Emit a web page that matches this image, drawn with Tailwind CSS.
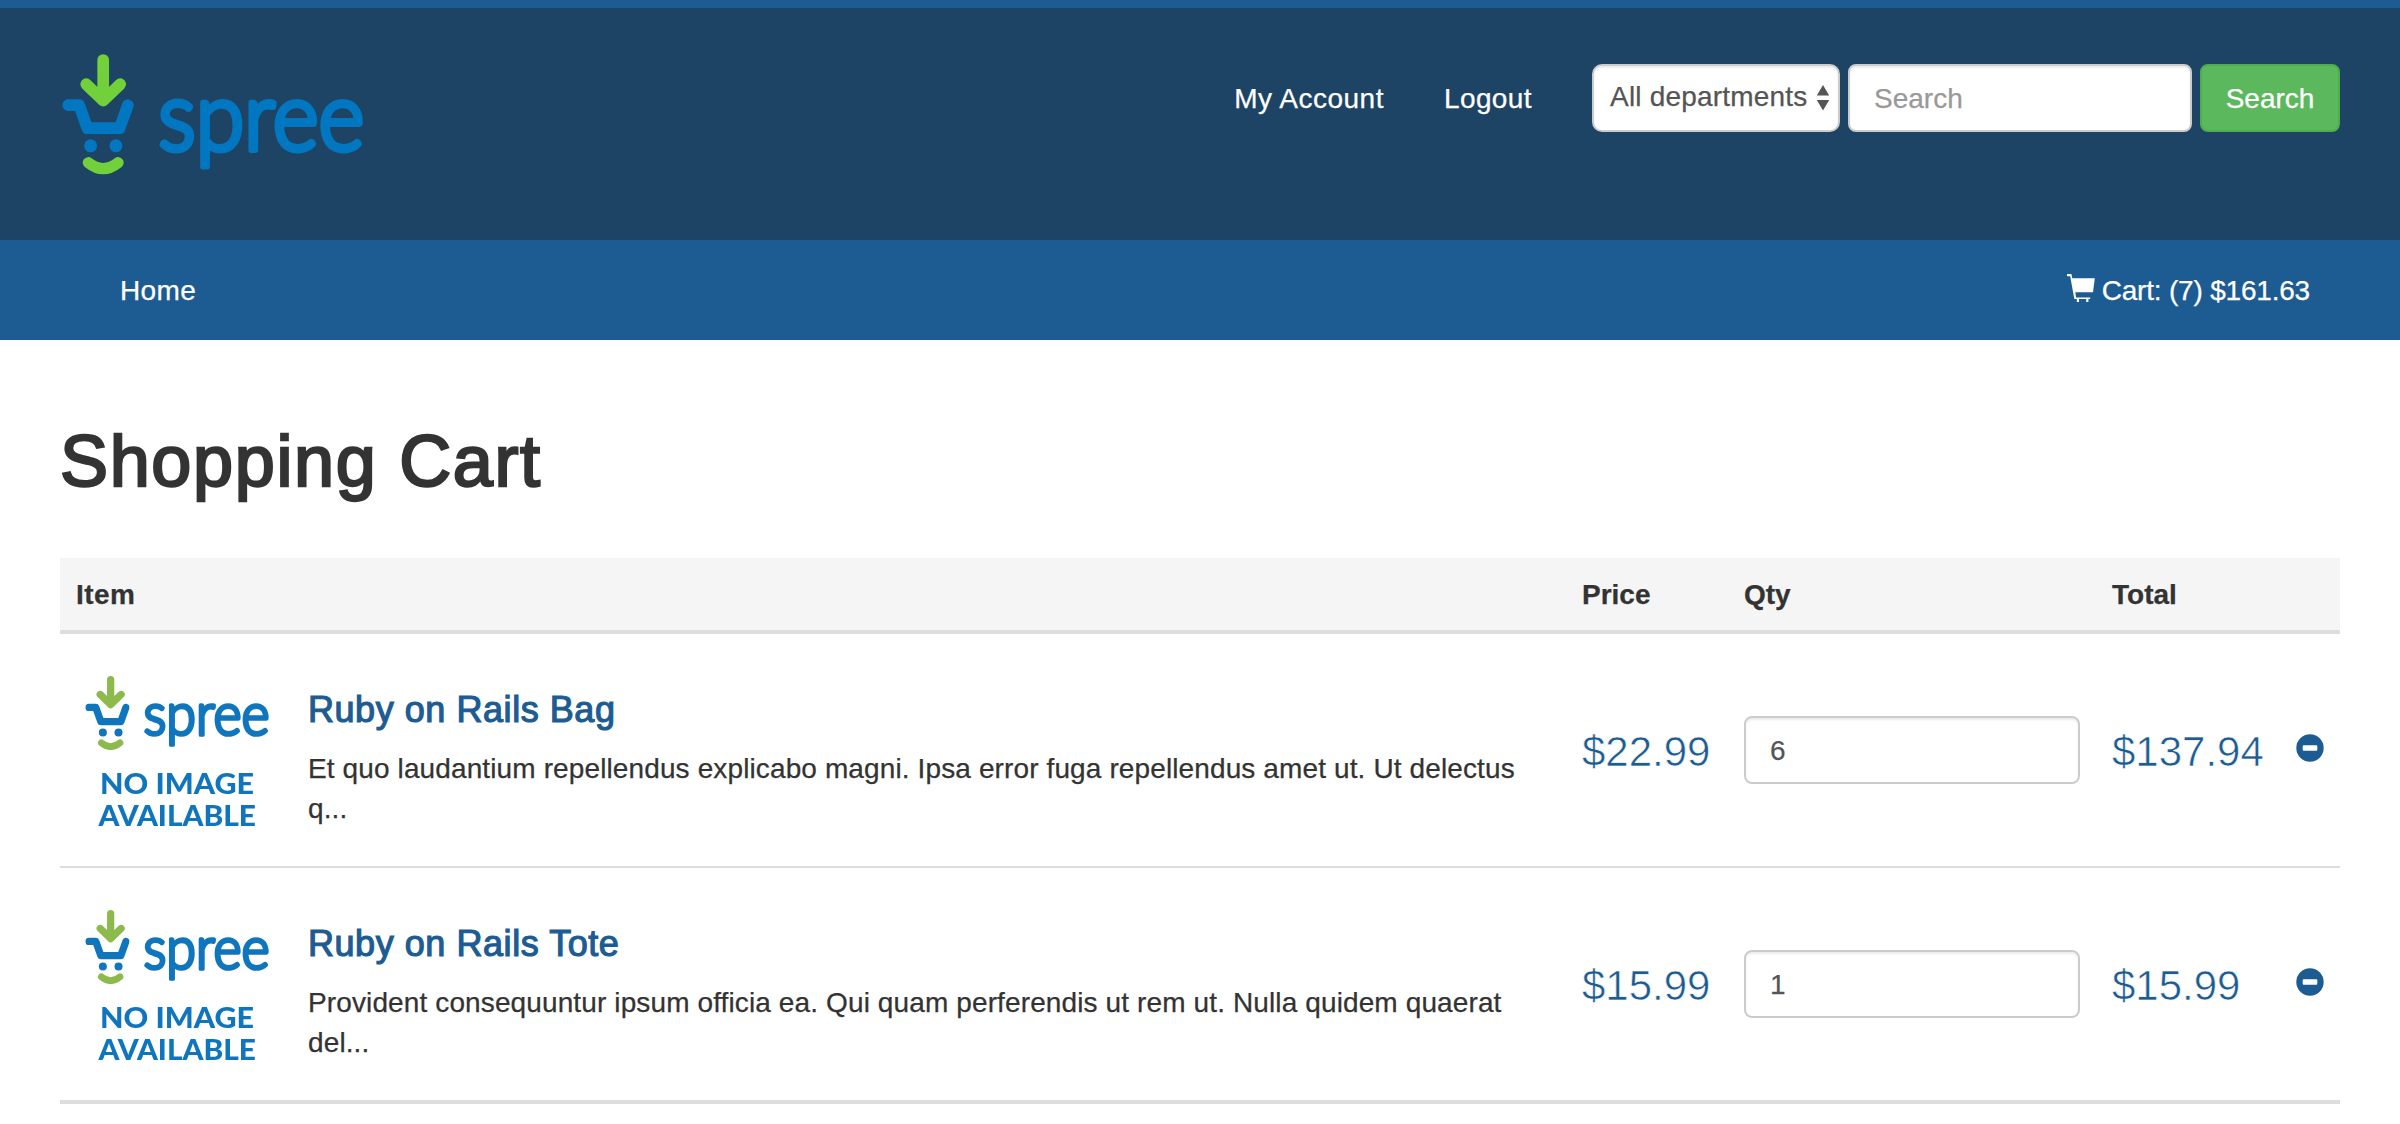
<!DOCTYPE html>
<html lang="en">
<head>
<meta charset="utf-8">
<title>Shopping Cart</title>
<script src="https://cdn.jsdelivr.net/npm/@tailwindcss/browser@4"></script>
</head>
<body class="overflow-hidden bg-white font-['Liberation_Sans',Arial,sans-serif] text-[28px] leading-10 text-[#333] [-webkit-text-stroke-width:0.25px]">

<svg class="hidden">
  <!-- cart face used by the header logo and the product placeholder -->
  <symbol id="mark" viewBox="0 0 72 121">
    <g fill="none" stroke-width="11.7" stroke-linecap="round" stroke-linejoin="round">
      <path stroke="currentColor" d="M6.2 51.2H17.2L25.4 74.2H57.6L65.8 51.2"/>
      <path class="stroke-(--leaf)" d="M41.2 6V46.4M24.2 30.2L41.2 46.6L58.2 30.2"/>
      <path class="stroke-(--leaf)" stroke-width="11" d="M26.2 108.6Q41.2 120.6 56.2 108.6"/>
    </g>
    <circle cx="28.6" cy="91.8" r="6.5" fill="currentColor"/>
    <circle cx="53.9" cy="91.8" r="6.5" fill="currentColor"/>
  </symbol>
  <symbol id="minus" viewBox="0 0 28 28">
    <path fill="currentColor" fill-rule="evenodd" d="M14 .3a13.7 13.7 0 1 1 0 27.4a13.7 13.7 0 1 1 0-27.4zM7.7 11.2a1 1 0 0 0-1 1v3.6a1 1 0 0 0 1 1h12.6a1 1 0 0 0 1-1v-3.6a1 1 0 0 0-1-1z"/>
  </symbol>
  <symbol id="placeholder" viewBox="0 0 200 200">
    <use href="#mark" x="9.2" y="25.8" width="44.5" height="74.8"/>
    <text x="67.5" y="85" font-family="Lato, sans-serif" font-weight="300" font-size="58.5" stroke="currentColor" stroke-width="3.7" stroke-linejoin="round" fill="currentColor" textLength="126" lengthAdjust="spacingAndGlyphs">spree</text>
    <g font-family="Lato, sans-serif" font-weight="900" font-size="28" fill="currentColor">
      <text x="24" y="144" textLength="154" lengthAdjust="spacingAndGlyphs">NO IMAGE</text>
      <text x="22.5" y="176" textLength="157.5" lengthAdjust="spacingAndGlyphs">AVAILABLE</text>
    </g>
  </symbol>
</svg>

<header class="flex h-[240px] items-start justify-between border-t-8 border-[#1d5c93] bg-[#1e4465] px-[60px]">
  <svg class="mt-[46px] h-[150px] w-[310px] overflow-visible text-[#0077c0] [--leaf:#72d03a]" viewBox="0 0 310 150" role="img" aria-label="spree">
    <use href="#mark" x="2" y="0" width="72" height="121"/>
    <text x="98.3" y="95.8" font-family="Lato, sans-serif" font-weight="300" font-size="95" stroke="currentColor" stroke-width="6" stroke-linejoin="round" fill="currentColor" textLength="206" lengthAdjust="spacingAndGlyphs">spree</text>
  </svg>
  <div class="mt-14 flex items-center text-white">
    <a class="mr-[60px] pt-0.5 tracking-[0.5px]">My Account</a>
    <a class="mr-[60px] pt-0.5 tracking-[0.4px]">Logout</a>
    <div class="mr-2 flex h-[68px] w-[248px] items-center justify-between rounded-[10px] border-2 border-[#ccc] bg-white pr-2 pl-4 text-[#555] shadow-[inset_0_2px_2px_rgba(0,0,0,0.075)]">
      <span class="-mt-0.5 tracking-[0.2px] whitespace-nowrap">All departments</span>
      <svg class="h-[26px] w-[14px] shrink-0" viewBox="0 0 14 26" fill="currentColor"><path d="M7 0L13.2 10.5H.8zM7 25.5L.8 15H13.2z"/></svg>
    </div>
    <div class="mr-2 flex h-[68px] w-[344px] items-center rounded-lg border-2 border-[#ccc] bg-white px-6 pt-0.5 text-[#999] shadow-[inset_0_2px_2px_rgba(0,0,0,0.075)]">Search</div>
    <button class="h-[68px] w-[140px] rounded-lg border-2 border-[#4cae4c] bg-[#5cb85c] pt-0.5 text-white">Search</button>
  </div>
</header>

<nav class="flex h-[100px] items-center justify-between bg-[#1d5c93] pr-[90px] pl-[120px] text-white">
  <a class="pt-0.5 tracking-[0.35px]">Home</a>
  <a class="flex items-center gap-[7px]">
    <svg class="-mt-1 h-7 w-7" viewBox="0 0 28 28" fill="currentColor"><path d="M0 0H4.4L5.3 4.3H27.8L26 18.2H8.3L9.1 23.4H23.2V25H21.4V28H19.2V25H12V28H9.8V25H7.3L3.2 2.2H0z"/></svg>
    <span class="pt-0.5 tracking-[-0.2px]">Cart: (7) $161.63</span>
  </a>
</nav>

<main class="px-[60px]">
  <h1 class="pt-[81px] text-[72px] leading-[80px] font-normal tracking-[1.65px] [-webkit-text-stroke-width:2.4px]">Shopping Cart</h1>
  <table class="mt-[57px] w-[2280px] table-fixed border-separate border-spacing-0">
    <colgroup><col class="w-[1506px]"><col class="w-[162px]"><col class="w-[368px]"><col class="w-[184px]"><col class="w-[60px]"></colgroup>
    <thead>
      <tr class="h-[76px] bg-[#f5f5f5] text-left *:border-b-4 *:border-[#ddd] *:px-4 *:pt-0.5">
        <th class="tracking-[0.4px]">Item</th><th>Price</th><th>Qty</th><th>Total</th><th></th>
      </tr>
    </thead>
    <tbody>
      <tr class="h-[234px] *:border-b-2 *:border-[#ddd] *:px-4">
        <td>
          <div class="flex items-start">
            <svg class="size-[200px] shrink-0 text-[#0f75bc] blur-[0.7px] [--leaf:#8cba4c]" role="img" aria-label="No image available"><use href="#placeholder"/></svg>
            <div class="ml-8 pt-10">
              <h4 class="mb-[19px] text-[36px] leading-10 tracking-[0.55px] text-[#1d5c93] [-webkit-text-stroke-width:1.2px]">Ruby on Rails Bag</h4>
              <p class="w-[1230px] tracking-[0.12px]">Et quo laudantium repellendus explicabo magni. Ipsa error fuga repellendus amet ut. Ut delectus<br>q...</p>
            </div>
          </div>
        </td>
        <td class="pt-[3px] text-[42px] text-[#1d5c93] [-webkit-text-stroke:0.6px_#fff]">$22.99</td>
        <td><div class="flex h-[68px] w-[336px] items-center rounded-lg border-2 border-[#ccc] px-6 pt-0.5 text-[#555] shadow-[inset_0_2px_2px_rgba(0,0,0,0.075)]">6</div></td>
        <td class="pt-[3px] text-[42px] text-[#1d5c93] [-webkit-text-stroke:0.6px_#fff]">$137.94</td>
        <td><svg class="-mt-1 h-7 w-7 text-[#1d5c93]"><use href="#minus"/></svg></td>
      </tr>
      <tr class="h-[236px] *:border-b-4 *:border-[#ddd] *:px-4">
        <td>
          <div class="flex items-start">
            <svg class="size-[200px] shrink-0 text-[#0f75bc] blur-[0.7px] [--leaf:#8cba4c]" role="img" aria-label="No image available"><use href="#placeholder"/></svg>
            <div class="ml-8 pt-10">
              <h4 class="mb-[19px] text-[36px] leading-10 tracking-[0.55px] text-[#1d5c93] [-webkit-text-stroke-width:1.2px]">Ruby on Rails Tote</h4>
              <p class="w-[1230px] tracking-[0.12px]">Provident consequuntur ipsum officia ea. Qui quam perferendis ut rem ut. Nulla quidem quaerat<br>del...</p>
            </div>
          </div>
        </td>
        <td class="pt-[3px] text-[42px] text-[#1d5c93] [-webkit-text-stroke:0.6px_#fff]">$15.99</td>
        <td><div class="flex h-[68px] w-[336px] items-center rounded-lg border-2 border-[#ccc] px-6 pt-0.5 text-[#555] shadow-[inset_0_2px_2px_rgba(0,0,0,0.075)]">1</div></td>
        <td class="pt-[3px] text-[42px] text-[#1d5c93] [-webkit-text-stroke:0.6px_#fff]">$15.99</td>
        <td><svg class="-mt-1 h-7 w-7 text-[#1d5c93]"><use href="#minus"/></svg></td>
      </tr>
    </tbody>
  </table>
</main>
</body>
</html>
